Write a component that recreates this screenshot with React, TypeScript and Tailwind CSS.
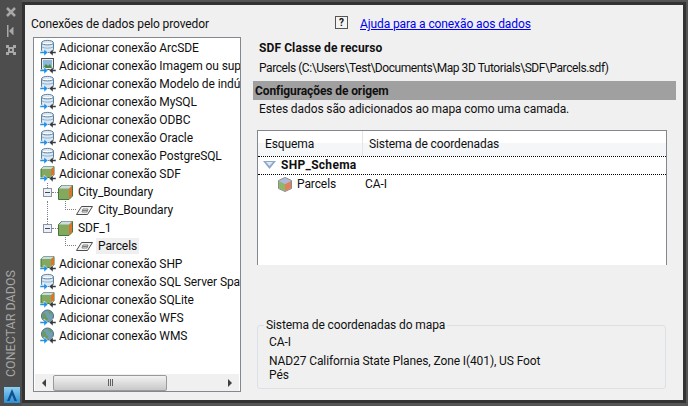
const FONT = "font-['Roboto','Noto_Sans',sans-serif]";

type Kind = 'db' | 'image' | 'sdf' | 'globe';

// two small arrows sitting on the lower edge of every provider icon
function Arrows() {
  return (
    <>
      <path d="M1 12.500h4V10l4 3.500L5 17v-2.500H1z" fill="#1f8fe8" stroke="#fff" strokeWidth=".5" />
      <path d="M17 12.500h-3V10l-4 3.500 4 3.500v-2.500h3z" fill="#353a40" stroke="#fff" strokeWidth=".5" />
    </>
  );
}

function ProviderIcon({ kind }: { kind: Kind }) {
  return (
    <svg width="18" height="18" viewBox="0 0 18 18" className="shrink-0">
      {kind === 'db' && (
        <>
          <path d="M2.500 4c0-3.500 12-3.500 12 0v7c0 2-2 2.500-6 2.500s-6-.5-6-2.500z" fill="#dbe8f4" stroke="#5b7f9e" />
          <path d="M2.500 4c0 2.500 12 2.500 12 0" fill="#fff" stroke="#5b7f9e" />
          <path d="M3 8c2 1.500 9 1.500 11 0" fill="none" stroke="#8fb0ca" />
        </>
      )}
      {kind === 'image' && (
        <>
          <rect x="2.500" y="1.500" width="12" height="11" fill="#e8eef2" stroke="#4a4f55" />
          <rect x="4" y="3" width="9" height="8" fill="#8fb8d8" />
          <path d="M4 11l3-4 2 2 2-2 2 4z" fill="#4e8a46" />
        </>
      )}
      {kind === 'sdf' && (
        <>
          <path d="M2 4l3-2.500h10V10l-3 2.500H2z" fill="#84a95e" stroke="#3d7a3a" />
          <path d="M12 4l3-2.500V10l-3 2.500z" fill="#d9752e" />
          <path d="M2 4l3-2.500h10L12 4z" fill="#c9d9e8" />
        </>
      )}
      {kind === 'globe' && (
        <>
          <circle cx="8.500" cy="7" r="6" fill="#6f9fb0" stroke="#4b6a78" />
          <path d="M4 4c2 0 3 1 3 3s2 1 2 3-2 2-3 2c-2-1-3-4-2-8zM9 2c2 0 3 1 4 3-2 1-3-1-4-3z" fill="#6d9a58" />
        </>
      )}
      <Arrows />
    </svg>
  );
}

function GreenCube() {
  return (
    <svg width="15" height="15" viewBox="0 0 15 15" className="shrink-0">
      <path d="M.5 3.500l3-3h11v10.500l-3.500 3.500H.5z" fill="#84a95e" stroke="#3d7a3a" />
      <path d="M11 3.500l3-3V11l-3 3z" fill="#d9752e" />
      <path d="M1 3.500l3-3h10l-3 3z" fill="#cfdce8" />
    </svg>
  );
}

function LayerIcon() {
  return (
    <svg width="17" height="9" viewBox="0 0 17 9" className="shrink-0">
      <path d="M5.500.5h11l-5 8H.5z" fill="#f3f3f3" stroke="#4d4d4d" />
      <path d="M6 4.500h5M7 3h5l-1 3H6z" stroke="#808080" fill="none" />
    </svg>
  );
}

function ExpandBox() {
  return (
    <span className="relative z-10 w-[9px] h-[9px] shrink-0 border border-[#8a94a6] bg-[#eef0f3] flex items-center justify-center">
      <span className="w-[5px] h-px bg-[#3c4a5e]" />
    </span>
  );
}

function ProviderRow({ kind, label }: { kind: Kind; label: string }) {
  return (
    <div className="h-[18px] flex items-center pl-[5px] gap-[2px] whitespace-nowrap">
      <ProviderIcon kind={kind} />
      <span>{label}</span>
    </div>
  );
}

function GroupRow({ label, spineTop }: { label: string; spineTop?: boolean }) {
  return (
    <div className="relative h-[18px] flex items-center pl-[9px] whitespace-nowrap">
      <span className={`absolute left-[13px] w-px border-l border-dotted border-[#808080] ${spineTop ? 'top-0 bottom-0' : 'top-0 h-[9px]'}`} />
      <ExpandBox />
      <span className="w-[6px] border-t border-dotted border-[#808080]" />
      <GreenCube />
      <span className="ml-[5px]">{label}</span>
    </div>
  );
}

function LayerRow({ label, selected, spine }: { label: string; selected?: boolean; spine?: boolean }) {
  return (
    <div className="relative h-[18px] flex items-center pl-[31px] whitespace-nowrap">
      {spine && <span className="absolute left-[13px] top-0 bottom-0 border-l border-dotted border-[#808080]" />}
      <span className="w-[11px] h-[9px] mb-[9px] border-l border-b border-dotted border-[#808080]" />
      <LayerIcon />
      <span className={selected ? 'ml-[3px] px-[2px] bg-[#efefef]' : 'ml-[5px]'}>{label}</span>
    </div>
  );
}

function Scrollbar() {
  return (
    <div className="h-[17px] mx-px flex items-center bg-[#f0f0f0]">
      <div className="w-[18px] flex justify-center">
        <span className="border-y-[4px] border-r-[4px] border-y-transparent border-r-[#404040]" />
      </div>
      <div className="w-[114px] h-[16px] rounded-[2px] border border-[#9a9a9a] bg-gradient-to-b from-[#f2f2f2] to-[#c8c8c8] flex items-center justify-center gap-px">
        <span className="w-px h-[7px] bg-[#606060]" />
        <span className="w-px h-[7px] bg-[#606060]" />
        <span className="w-px h-[7px] bg-[#606060]" />
      </div>
      <div className="flex-1" />
      <div className="w-[18px] flex justify-center">
        <span className="border-y-[4px] border-l-[4px] border-y-transparent border-l-[#404040]" />
      </div>
    </div>
  );
}

function Sidebar() {
  return (
    <div className="w-[22px] shrink-0 bg-[#4d4d4d] flex flex-col items-center pt-[5px] pb-[3px]">
      <svg width="12" height="12" viewBox="0 0 12 12" className="mt-[1px]">
        <path d="M2 2l8 8M10 2l-8 8" stroke="#a8a8a8" strokeWidth="2.500" />
      </svg>
      <svg width="12" height="12" viewBox="0 0 12 12" className="mt-[7px]">
        <path d="M2 0h1.500v12H2zM4 6l4-4h.5v8H8z" fill="#a8a8a8" />
      </svg>
      <svg width="12" height="12" viewBox="0 0 12 12" className="mt-[7px]">
        <path d="M1 1h3v2h4V1h3v3H9v4h2v3H8V9H4v2H1V8h2V4H1z" fill="#a8a8a8" />
        <rect x="5" y="5" width="2" height="2" fill="#4d4d4d" />
      </svg>
      <div className="flex-1 flex items-end pb-[10px]">
        <span className="[writing-mode:vertical-rl] rotate-180 text-[12.5px] tracking-normal leading-none text-[#a6a6a6] whitespace-nowrap">
          CONECTAR DADOS
        </span>
      </div>
      <svg width="16" height="16" viewBox="0 0 16 16" className="ml-px">
        <defs>
          <linearGradient id="logo" x1="0" y1="0" x2="0" y2="1">
            <stop offset="0" stopColor="#8fd0f2" />
            <stop offset="1" stopColor="#2a8fd0" />
          </linearGradient>
        </defs>
        <rect width="16" height="16" fill="url(#logo)" />
        <path d="M8 2l5 12h-2.500L8 8l-2.500 6H3z" fill="#0f4f92" />
      </svg>
    </div>
  );
}

export default function App() {
  return (
    <div className={`w-[688px] h-[406px] overflow-hidden bg-[#555555] flex text-[12px] leading-[16px] tracking-[-0.1px] text-[#101010] ${FONT}`}>
      <Sidebar />

      <div className="flex-1 pt-[2px] pr-[2px] pb-[3px] flex flex-col">
        <div className="flex-1 border-[3px] border-[#333333] bg-[#f0f0f0] flex pl-[8px] pr-[7px]">
          {/* Left: provider tree */}
          <div className="w-[208px] shrink-0 flex flex-col">
            <div className="h-[32px] pt-[11px] -ml-[2px]">Conexões de dados pelo provedor</div>
            <div className="h-[355px] border border-[#828790] bg-white flex flex-col overflow-hidden">
              <div className="flex-1 pt-px overflow-hidden">
                <ProviderRow kind="db" label="Adicionar conexão ArcSDE" />
                <ProviderRow kind="image" label="Adicionar conexão Imagem ou superfície" />
                <ProviderRow kind="db" label="Adicionar conexão Modelo de indústria" />
                <ProviderRow kind="db" label="Adicionar conexão MySQL" />
                <ProviderRow kind="db" label="Adicionar conexão ODBC" />
                <ProviderRow kind="db" label="Adicionar conexão Oracle" />
                <ProviderRow kind="db" label="Adicionar conexão PostgreSQL" />
                <ProviderRow kind="sdf" label="Adicionar conexão SDF" />
                <GroupRow label="City_Boundary" />
                <LayerRow label="City_Boundary" spine />
                <GroupRow label="SDF_1" />
                <LayerRow label="Parcels" selected />
                <ProviderRow kind="sdf" label="Adicionar conexão SHP" />
                <ProviderRow kind="db" label="Adicionar conexão SQL Server Spatial" />
                <ProviderRow kind="sdf" label="Adicionar conexão SQLite" />
                <ProviderRow kind="globe" label="Adicionar conexão WFS" />
                <ProviderRow kind="globe" label="Adicionar conexão WMS" />
              </div>
              <Scrollbar />
            </div>
          </div>

          {/* Right: details */}
          <div className="flex-1 ml-[12px] flex flex-col">
            <div className="h-[30px] pt-[11px] pl-[82px] flex items-start">
              <span className="w-[13px] h-[13px] border border-[#555] bg-[#f4f4f4] flex items-center justify-center text-[10px] font-bold leading-none">?</span>
              <a className="ml-[12px] text-[#0000ee] underline" href="#">Ajuda para a conexão aos dados</a>
            </div>
            <div className="pl-[6px] pt-[5px] font-bold tracking-[0.1px]">SDF Classe de recurso</div>
            <div className="pl-[6px] pt-[4px] tracking-[-0.44px]">Parcels (C:\Users\Test\Documents\Map 3D Tutorials\SDF\Parcels.sdf)</div>
            <div className="mt-[5px] h-[19px] pt-px bg-[#a0a0a0] pl-[2px] font-bold flex items-center">Configurações de origem</div>
            <div className="pl-[6px] mt-px">Estes dados são adicionados ao mapa como uma camada.</div>

            <div className="mt-[13px] mx-[4px] w-[410px] h-[135px] border-x border-t border-[#828790] bg-white">
              <div className="h-[25px] flex items-center bg-gradient-to-b from-white from-50% to-[#f4f6f8] to-50%">
                <span className="w-[105px] pl-[7px] h-full flex items-center border-r border-[#e3e5e9]">Esquema</span>
                <span className="pl-[6px]">Sistema de coordenadas</span>
              </div>
              <div className="h-[19px] border-y border-dotted border-black flex items-center pl-[5px] pb-px font-bold tracking-[0.3px]">
                <svg width="13" height="8" viewBox="0 0 13 8" className="mr-[5px]">
                  <path d="M0 0h13L6.500 8z" fill="#8fa8c8" />
                  <path d="M3 1h7L6.500 5z" fill="#dfe8f2" />
                </svg>
                SHP_Schema
              </div>
              <div className="h-[18px] flex items-center pl-[20px]">
                <svg width="14" height="15" viewBox="0 0 14 15" className="mr-[5px]">
                  <path d="M7 .5l6.500 3v8L7 14.500.5 11.500v-8z" fill="#bbb" stroke="#8a8a8a" />
                  <path d="M1 4l6 3v7L1 11z" fill="#8cb86a" />
                  <path d="M13 4L7 7v7l6-3z" fill="#e2805a" />
                  <path d="M7 1l6 3-6 3-6-3z" fill="#aeb8d8" />
                </svg>
                <span className="w-[68px]">Parcels</span>
                CA-I
              </div>
            </div>

            <div className="relative mt-[60px] mx-[4px] w-[409px] h-[64px] border border-[#d9e0e6] rounded-[3px] pl-[11px] pt-[8px]">
              <span className="absolute -top-[9px] left-[6px] px-[2px] bg-[#f0f0f0]">Sistema de coordenadas do mapa</span>
              <div>CA-I</div>
              <div className="mt-[3px] leading-[16px]">NAD27 California State Planes, Zone I(401), US Foot</div>
              <div className="-mt-px leading-[14px]">Pés</div>
            </div>
          </div>
        </div>
      </div>
    </div>
  );
}
